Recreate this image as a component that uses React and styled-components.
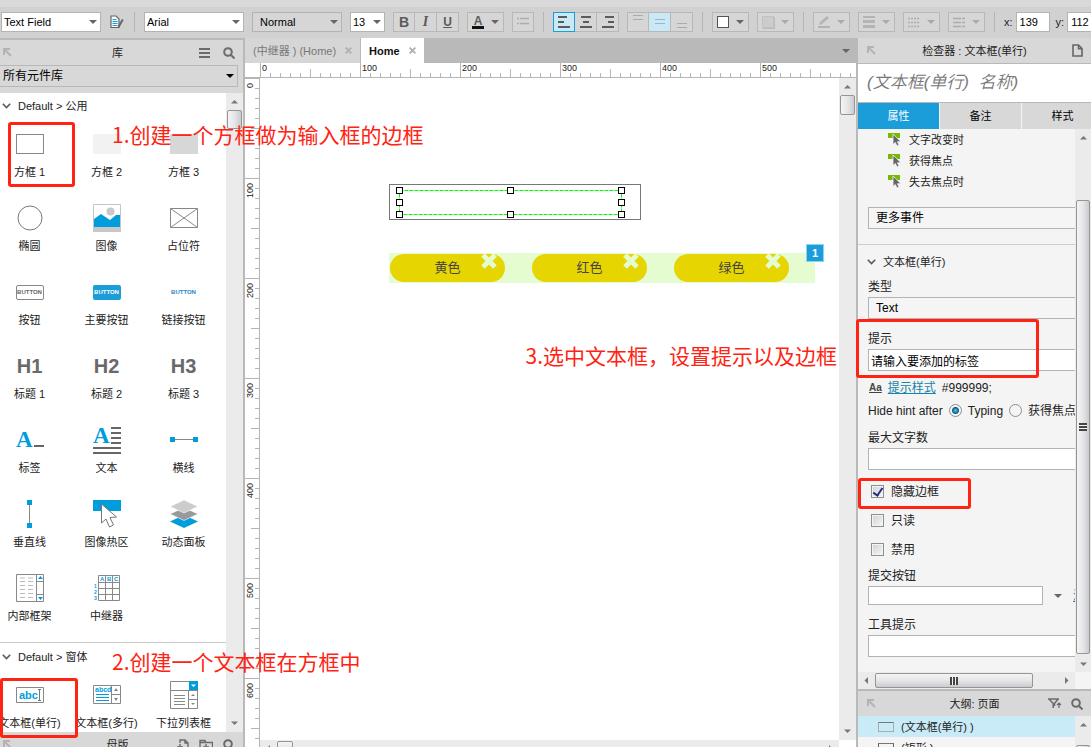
import styled, { createGlobalStyle, css } from "styled-components";

const RED = "#ff2313";
const BLUE = "#1b9dd9";
const ICON_BLUE = "#009ddc";

const Caret = ({ color = "#666" }) => (
  <svg width="8" height="4" viewBox="0 0 8 4">
    <path d="M0 0h8L4 4z" fill={color} />
  </svg>
);
const PinIcon = () => (
  <svg width="9" height="9" viewBox="0 0 9 9" fill="none" stroke="#b4b4b4" strokeWidth="2">
    <path d="M1 7V1h6M1 1l7 7" />
  </svg>
);
const SearchIcon = () => (
  <svg width="12" height="12" viewBox="0 0 12 12" fill="none" stroke="#6b6b6b" strokeWidth="2">
    <circle cx="5" cy="5" r="3.800" />
    <path d="M7.700 7.700l3.800 3.800" />
  </svg>
);
const MenuIcon = () => (
  <svg width="11" height="10" viewBox="0 0 11 10" fill="#6b6b6b">
    <path d="M0 0h11v2H0zM0 4h11v2H0zM0 8h11v2H0z" />
  </svg>
);
const ChevronIcon = () => (
  <svg width="9" height="6" viewBox="0 0 9 6" fill="none" stroke="#555a60" strokeWidth="1.600">
    <path d="M.8.8l3.700 3.700L8.200.8" />
  </svg>
);
const CloseIcon = () => (
  <svg width="7" height="7" viewBox="0 0 7 7" fill="none" stroke="#b0b0b0" strokeWidth="1.800">
    <path d="M.6.6l5.800 5.800M6.400.6L.6 6.400" />
  </svg>
);
const PageIcon = () => (
  <svg width="11" height="13" viewBox="0 0 11 13" fill="none" stroke="#666" strokeWidth="1.600">
    <path d="M1 1h5.500L10 4.500V12H1zM6.500 1v3.700H10" />
  </svg>
);
const EventIcon = () => (
  <svg width="13" height="13" viewBox="0 0 13 13">
    <path d="M0 0h12v5H0z" fill="#76b900" />
    <path d="M5 1v10.500l2.300-2L9 13l2-.9-1.500-3.400H13z" fill="#666" stroke="#f4f4f4" strokeWidth=".8" />
  </svg>
);
const EditStyleIcon = () => (
  <svg width="14" height="14" viewBox="0 0 14 14" fill="none">
    <path d="M1 1h5l3 3v8.500H1z" fill="#fff" stroke="#666" strokeWidth="1.200" />
    <path d="M2.500 4.500h4M2.500 6.500h5M2.500 8.500h5M2.500 10.500h5" stroke={BLUE} />
    <path d="M12.800 4.500L8.500 12" stroke="#666" strokeWidth="2" />
  </svg>
);
const FilterIcon = () => (
  <svg width="14" height="11" viewBox="0 0 14 11" fill="none" stroke="#6b6b6b" strokeWidth="1.500">
    <path d="M0 1h11M1 1l4.200 4.500V10M10 1L6.500 5.500V8" />
    <path d="M11 10V5M9 7l2-2 2 2" strokeWidth="1.200" />
  </svg>
);
const AddPageIcon = () => (
  <svg width="12" height="12" viewBox="0 0 12 12" fill="none" stroke="#6b6b6b" strokeWidth="1.400">
    <path d="M3 4V1h5l3 3v7H7M8 1v3h3M0 8h6M3 5v6" />
  </svg>
);
const AddFolderIcon = () => (
  <svg width="14" height="12" viewBox="0 0 14 12" fill="none" stroke="#6b6b6b" strokeWidth="1.400">
    <path d="M1 11V1.500h5l1 2h6.500V11M4 8h6M7 5v6M1 3.500h8" />
  </svg>
);

// bars: [x, width] for each line of a paragraph icon
const Bars = ({ bars, color = "#5b5b5b", step = 4, thick = 2 }) => (
  <svg width="12" height={bars.length * step} viewBox={`0 0 12 ${bars.length * step}`}>
    {bars.map(([x, w], i) => (
      <rect key={i} x={x} y={i * step + 1} width={w} height={thick} fill={color} />
    ))}
  </svg>
);
const FaintRows = ({ rows = 2, dash }) => (
  <svg width="12" height="12" viewBox="0 0 12 12" stroke="#adadad" fill="none">
    {Array.from({ length: rows }, (_, i) => (
      <path key={i} d={`M0 ${2.5 + i * (rows > 2 ? 4 : 5)}h12`} strokeDasharray={dash} strokeWidth="1.500" />
    ))}
  </svg>
);

const shapes = {
  box1: <rect x=".5" y="4.500" width="27" height="19" fill="#fff" stroke="#888" />,
  box2: <rect y="4" width="28" height="20" fill="#f2f2f2" />,
  box3: <rect y="4" width="28" height="20" fill="#d7d7d7" />,
  ellipse: <circle cx="14" cy="14" r="12" fill="#fff" stroke="#777" />,
  image: (
    <>
      <path d="M.5.5h27v27H.5z" fill="#fff" stroke="#c4c4c4" />
      <circle cx="17.500" cy="7.500" r="4" fill="#c8c8c8" />
      <path d="M1 15l7-5 9 6 6-5h4v12H1z" fill={ICON_BLUE} />
      <path d="M0 23h28v5H0z" fill="#c8c8c8" />
    </>
  ),
  placeholder: (
    <g stroke="#888" fill="#fff">
      <path d="M.5 4.500h27v19H.5z" />
      <path d="M.5 4.500l27 19M27.500 4.500l-27 19" />
    </g>
  ),
  label: <path d="M18 19h10v2H18z" fill="#666" />,
  text: <path d="M18 1h10v2H18zM18 6h10v2H18zM18 11h10v2H18zM18 16h10v2H18zM0 21h28v2H0zM0 26h28v2H0z" fill="#666" />,
  hline: (
    <>
      <path d="M2 13.500h24" stroke="#888" />
      <path d="M0 11h5v5H0zM23 11h5v5h-5z" fill={ICON_BLUE} />
    </>
  ),
  vline: (
    <>
      <path d="M13.500 2v24" stroke="#888" />
      <path d="M11 0h5v5h-5zM11 23h5v5h-5z" fill={ICON_BLUE} />
    </>
  ),
  hotspot: (
    <>
      <path d="M0 0h28v11H0z" fill={ICON_BLUE} />
      <path d="M8.500 4v19l4.500-4 3.500 8 4-2-3.500-7.500 6.500-.5z" fill="#fff" stroke="#777" />
    </>
  ),
  dynamic: (
    <>
      <path d="M14 15l14 6.500L14 28 0 21.500z" fill={ICON_BLUE} />
      <path d="M14 7.500L28 14l-14 6.500L0 14z" fill="#999" stroke="#fff" strokeWidth=".6" />
      <path d="M14 0l14 6.500L14 13 0 6.500z" fill="#ccc" stroke="#fff" strokeWidth=".6" />
    </>
  ),
  iframe: (
    <>
      <path d="M.5.5h27v27H.5zM20.500.5v27M20.500 7.500h7M20.500 20.500h7" fill="none" stroke="#888" />
      <path d="M4 4h5m3 0h5M4 7.500h5m3 0h5M4 11.500h5m3 0h5M4 15.500h5m3 0h5M4 19.500h5m3 0h5M4 23.500h5m3 0h5" stroke="#bbb" />
      <path d="M22 5h5l-2.500-3zM22 23h5l-2.500 3z" fill={ICON_BLUE} />
    </>
  ),
  repeater: (
    <>
      <path d="M5.500 1.500h21v25h-21zM12.500 1.500v25M19.500 1.500v25M5.500 8.500h21M5.500 14.500h21M5.500 20.500h21" fill="none" stroke="#888" />
      <SvgText x="7" y="7" fontSize="6">A</SvgText>
      <SvgText x="14" y="7" fontSize="6">B</SvgText>
      <SvgText x="21" y="7" fontSize="6">C</SvgText>
      <SvgText x="1" y="14" fontSize="5">1</SvgText>
      <SvgText x="1" y="20" fontSize="5">2</SvgText>
      <SvgText x="1" y="26" fontSize="5">3</SvgText>
    </>
  ),
  field: (
    <>
      <path d="M.5 6.500h27v15H.5z" fill="#fff" stroke="#888" />
      <SvgText x="3" y="18" fontSize="11">abc</SvgText>
      <path d="M22 8.500h3M22 19.500h3M23.500 8.500v11" stroke="#777" />
    </>
  ),
  area: (
    <>
      <path d="M.5 4.500h27v18H.5zM18.500 4.500v18M18.500 13.500h9" fill="#fff" stroke="#888" />
      <SvgText x="2" y="11" fontSize="7">abcd</SvgText>
      <path d="M3 13.500h13M3 16.500h13M3 19.500h13" stroke={ICON_BLUE} />
      <path d="M21 10h4l-2-3zM21 17h4l-2 3z" fill="#888" />
    </>
  ),
  droplist: (
    <>
      <path d="M.5.5h27v27H.5zM.5 9.500h27M18.500 9.500v18M18.500 18.500h9" fill="#fff" stroke="#888" />
      <path d="M19 0h9v9h-9z" fill={ICON_BLUE} />
      <path d="M21 3.500h5L23.500 6z" fill="#fff" />
      <path d="M4 14.500h11M4 17.500h11M4 20.500h11M4 23.500h11" stroke="#888" />
      <path d="M21 15h4l-2-2zM21 22h4l-2 2z" fill="#888" />
    </>
  ),
};

function SvgText({ children, ...rest }) {
  return (
    <text fill={ICON_BLUE} fontFamily="Liberation Sans" fontWeight="bold" {...rest}>
      {children}
    </text>
  );
}

const SvgShape = ({ name }) => (
  <svg width="28" height="28" viewBox="0 0 28 28" overflow="visible">
    {(name === "label" || name === "text") && (
      <text
        x="0"
        y={name === "label" ? 21 : 17}
        fontSize="23"
        fontWeight="bold"
        fontFamily="Liberation Serif"
        fill={ICON_BLUE}
      >
        A
      </text>
    )}
    {shapes[name]}
  </svg>
);

const commonWidgets = [
  { name: "方框 1", icon: "box1" },
  { name: "方框 2", icon: "box2" },
  { name: "方框 3", icon: "box3" },
  { name: "椭圆", icon: "ellipse" },
  { name: "图像", icon: "image" },
  { name: "占位符", icon: "placeholder" },
  { name: "按钮", button: "outline" },
  { name: "主要按钮", button: "primary" },
  { name: "链接按钮", button: "link" },
  { name: "标题 1", heading: "H1" },
  { name: "标题 2", heading: "H2" },
  { name: "标题 3", heading: "H3" },
  { name: "标签", icon: "label" },
  { name: "文本", icon: "text" },
  { name: "横线", icon: "hline" },
  { name: "垂直线", icon: "vline" },
  { name: "图像热区", icon: "hotspot" },
  { name: "动态面板", icon: "dynamic" },
  { name: "内部框架", icon: "iframe" },
  { name: "中继器", icon: "repeater" },
];
const formWidgets = [
  { name: "文本框(单行)", icon: "field" },
  { name: "文本框(多行)", icon: "area" },
  { name: "下拉列表框", icon: "droplist" },
];

const Widgets = ({ items }) => (
  <WidgetGrid>
    {items.map((el) => (
      <Widget key={el.name}>
        <WidgetIcon>
          {el.icon && <SvgShape name={el.icon} />}
          {el.button && <MiniButton $kind={el.button}>BUTTON</MiniButton>}
          {el.heading && <MiniHeading>{el.heading}</MiniHeading>}
        </WidgetIcon>
        <WidgetName>{el.name}</WidgetName>
      </Widget>
    ))}
  </WidgetGrid>
);

const Dropdown = ({ value, width, muted, label, caret, inset }) => (
  <SelectBox $width={width} $muted={muted}>
    <Select aria-label={label} defaultValue={value} $inset={inset}>
      <option>{value}</option>
    </Select>
    <CaretSlot>
      <Caret color={caret} />
    </CaretSlot>
  </SelectBox>
);

const ScrollBar = ({ horizontal, size, before = 0, thumb, grip }) => (
  <Track $horizontal={horizontal} $size={size}>
    <TrackEnd $size={size}>
      <svg width="7" height="7" viewBox="0 0 7 7">
        <path d={horizontal ? "M5 0v7L1.500 3.500z" : "M0 5.500h7L3.500 2z"} fill="#777" />
      </svg>
    </TrackEnd>
    <TrackBody $horizontal={horizontal} $before={before}>
      <Thumb $horizontal={horizontal} $length={thumb}>
        {grip && <Grip $horizontal={horizontal} />}
      </Thumb>
    </TrackBody>
    <TrackEnd $size={size}>
      <svg width="7" height="7" viewBox="0 0 7 7">
        <path d={horizontal ? "M2 0v7l3.500-3.500z" : "M0 1.500h7L3.500 5z"} fill="#777" />
      </svg>
    </TrackEnd>
  </Track>
);

const Toolbar = () => (
  <ToolbarRow>
    <Dropdown label="样式" value="Text Field" width={100} />
    <PlainIcon aria-label="编辑样式">
      <EditStyleIcon />
    </PlainIcon>
    <Divider />
    <Dropdown label="字体" value="Arial" width={100} />
    <Dropdown label="字重" value="Normal" width={90} muted inset={7} />
    <Dropdown label="字号" value="13" width={35} />
    <ButtonGroup>
      <ToolButton $weight="bold">B</ToolButton>
      <ToolButton $italic>I</ToolButton>
      <ToolButton $underline>U</ToolButton>
    </ButtonGroup>
    <ButtonGroup>
      <ToolButton $wide aria-label="文字颜色">
        <ColorLetter>A</ColorLetter>
        <Caret />
      </ToolButton>
    </ButtonGroup>
    <ButtonGroup>
      <ToolButton aria-label="项目符号">
        <FaintRows dash="2 1 9" />
      </ToolButton>
    </ButtonGroup>
    <Divider />
    <ButtonGroup>
      <ToolButton $active aria-label="左对齐">
        <Bars bars={[[0, 9], [0, 6], [0, 12]]} step={5} />
      </ToolButton>
      <ToolButton aria-label="居中">
        <Bars bars={[[1, 10], [3, 6], [0, 12]]} step={5} />
      </ToolButton>
      <ToolButton aria-label="右对齐">
        <Bars bars={[[3, 9], [6, 6], [0, 12]]} step={5} />
      </ToolButton>
    </ButtonGroup>
    <ButtonGroup>
      <ToolButton $valign="flex-start" aria-label="顶部对齐">
        <Bars bars={[[1, 10], [1, 10]]} step={4} thick={1} color="#aaa" />
      </ToolButton>
      <ToolButton $pale aria-label="垂直居中">
        <Bars bars={[[1, 10], [1, 10]]} step={4} thick={1} color="#9ab6c2" />
      </ToolButton>
      <ToolButton $valign="flex-end" aria-label="底部对齐">
        <Bars bars={[[1, 10], [1, 10]]} step={4} thick={1} color="#aaa" />
      </ToolButton>
    </ButtonGroup>
    <Divider />
    <ButtonGroup>
      <ToolButton $wide aria-label="填充">
        <FillSwatch />
        <Caret />
      </ToolButton>
    </ButtonGroup>
    <ButtonGroup>
      <ToolButton $wide aria-label="阴影">
        <FillSwatch $shadow />
        <Caret color="#aaa" />
      </ToolButton>
    </ButtonGroup>
    <Divider />
    <ButtonGroup>
      <ToolButton $wide aria-label="线条颜色">
        <svg width="12" height="12" viewBox="0 0 12 12" fill="#b4b4b4">
          <path d="M0 10h12v2H0zM1 9l1-3 7-6 2 2-7 6z" />
        </svg>
        <Caret color="#aaa" />
      </ToolButton>
    </ButtonGroup>
    <ButtonGroup>
      <ToolButton $wide aria-label="线宽">
        <svg width="12" height="12" viewBox="0 0 12 12" fill="#b4b4b4">
          <path d="M0 0h12v2H0zM0 4h12v3H0zM0 9h12v3H0z" />
        </svg>
        <Caret color="#aaa" />
      </ToolButton>
    </ButtonGroup>
    <ButtonGroup>
      <ToolButton $wide aria-label="线型">
        <FaintRows rows={3} dash="2 1" />
        <Caret color="#aaa" />
      </ToolButton>
    </ButtonGroup>
    <ButtonGroup>
      <ToolButton $wide aria-label="箭头">
        <FaintRows rows={3} dash="8 1" />
        <Caret color="#aaa" />
      </ToolButton>
    </ButtonGroup>
    <Divider />
    <Coord>
      x:
      <CoordInput defaultValue="139" />
    </Coord>
    <Coord>
      y:
      <CoordInput defaultValue="112" />
    </Coord>
  </ToolbarRow>
);

const Library = () => (
  <LibraryPanel>
    <PanelHeader $line>
      <PinIcon />
      <PanelTitle>库</PanelTitle>
      <HeaderTools $gap={13}>
        <MenuIcon />
        <SearchIcon />
      </HeaderTools>
    </PanelHeader>
    <LibraryPicker>
      <Select aria-label="元件库" defaultValue="所有元件库" $inset={3} $large>
        <option>所有元件库</option>
      </Select>
      <CaretSlot>
        <Caret color="#000" />
      </CaretSlot>
    </LibraryPicker>
    <ScrollRow>
      <LibraryList>
        <GroupTitle>
          <ChevronIcon />
          Default &gt; 公用
        </GroupTitle>
        <Widgets items={commonWidgets} />
        <GroupTitle $next>
          <ChevronIcon />
          Default &gt; 窗体
        </GroupTitle>
        <Widgets items={formWidgets} />
      </LibraryList>
      <ScrollBar size={17} thumb={19} />
    </ScrollRow>
    <MasterBar>
      <PanelHeader>
        <PinIcon />
        <PanelTitle>母版</PanelTitle>
        <HeaderTools $gap={10}>
          <AddPageIcon />
          <AddFolderIcon />
          <SearchIcon />
        </HeaderTools>
      </PanelHeader>
    </MasterBar>
    <RedFrame $x={8} $y={84} $w={67} $h={65} />
    <RedFrame $x={0} $y={640} $w={78} $h={60} />
    <RedNote $x={112} $y={82}>1.创建一个方框做为输入框的边框</RedNote>
    <RedNote $x={112} $y={609}>2.创建一个文本框在方框中</RedNote>
  </LibraryPanel>
);

const handles = [0, 111, 222].flatMap((x) => [0, 12, 24].map((y) => [x, y])).filter(([x, y]) => !(x === 111 && y === 12));

const Workspace = () => (
  <WorkspacePanel>
    <TabBar>
      <PageTab>
        (中继器 ) (Home)
        <CloseIcon />
      </PageTab>
      <PageTab $active>
        Home
        <CloseIcon />
      </PageTab>
      <TabMenu>
        <Caret />
      </TabMenu>
    </TabBar>
    <RulerRow>
      <RulerCorner />
      <TopRuler>
        {[0, 100, 200, 300, 400, 500].map((n) => (
          <TopMark key={n}>{n}</TopMark>
        ))}
      </TopRuler>
    </RulerRow>
    <CanvasRow>
      <SideRuler>
        {[0, 100, 200, 300, 400, 500, 600].map((n) => (
          <SideMark key={n}>
            <span>{n}</span>
          </SideMark>
        ))}
      </SideRuler>
      <CanvasColumn>
        <ScrollRow>
          <Canvas>
            <OuterRect />
            <Selection width="230" height="32" viewBox="0 0 230 32">
              <rect x="4.500" y="4.500" width="222" height="24" fill="none" stroke="#0f0" strokeDasharray="4 1" />
              {handles.map(([x, y]) => (
                <rect key={`${x}-${y}`} x={x + 1.5} y={y + 1.5} width="6" height="6" fill="#fff" stroke="#000" />
              ))}
            </Selection>
            <Repeater>
              {["黄色", "红色", "绿色"].map((el) => (
                <Tag key={el}>
                  {el}
                  <TagClose viewBox="0 0 16 16">
                    <path d="M2 2l12 12M14 2L2 14" stroke="#e4fccf" strokeWidth="5" />
                  </TagClose>
                </Tag>
              ))}
            </Repeater>
            <Badge>1</Badge>
          </Canvas>
          <ScrollBar size={17} thumb={20} />
        </ScrollRow>
        <BottomScroll>
          <ScrollBar horizontal size={17} thumb={16} />
        </BottomScroll>
      </CanvasColumn>
    </CanvasRow>
    <RedNote $right={19} $y={303}>3.选中文本框，设置提示以及边框</RedNote>
  </WorkspacePanel>
);

const Inspector = () => (
  <InspectorPanel>
    <PanelHeader>
      <PinSlot>
        <PinIcon />
      </PinSlot>
      <PanelTitle>检查器 : 文本框(单行)</PanelTitle>
      <HeaderTools>
        <PageIcon />
      </HeaderTools>
    </PanelHeader>
    <NameInput aria-label="名称" placeholder="(文本框(单行)  名称)" />
    <InspectorTabs>
      <InspectorTab $active>属性</InspectorTab>
      <InspectorTab>备注</InspectorTab>
      <InspectorTab>样式</InspectorTab>
    </InspectorTabs>
    <ScrollRow>
      <FormColumn>
        <FormScroll>
          <Form>
            <EventList>
              {["文字改变时", "获得焦点", "失去焦点时"].map((el) => (
                <EventItem key={el}>
                  <EventIcon />
                  {el}
                </EventItem>
              ))}
            </EventList>
            <FormSelect aria-label="更多事件" defaultValue="更多事件">
              <option>更多事件</option>
            </FormSelect>
            <SectionTitle>
              <ChevronIcon />
              文本框(单行)
            </SectionTitle>
            <FieldLabel htmlFor="type">类型</FieldLabel>
            <FormSelect id="type" defaultValue="Text">
              <option>Text</option>
            </FormSelect>
            <FieldLabel htmlFor="hint" $gap={12}>提示</FieldLabel>
            <FormInput id="hint" defaultValue="请输入要添加的标签" />
            <InlineRow $gap={5}>
              <AaMark>Aa</AaMark>
              <StyleLink href="#hint">提示样式</StyleLink>
              <span>#999999;</span>
            </InlineRow>
            <InlineRow>
              <span>Hide hint after</span>
              <Option>
                <Radio type="radio" name="hide" defaultChecked />
                Typing
              </Option>
              <Option>
                <Radio type="radio" name="hide" />
                获得焦点
              </Option>
            </InlineRow>
            <FieldLabel htmlFor="max" $gap={8}>最大文字数</FieldLabel>
            <FormInput id="max" />
            <Checks>
              <CheckRow>
                <Check type="checkbox" defaultChecked />
                隐藏边框
              </CheckRow>
              <CheckRow>
                <Check type="checkbox" />
                只读
              </CheckRow>
              <CheckRow>
                <Check type="checkbox" />
                禁用
              </CheckRow>
            </Checks>
            <FieldLabel htmlFor="submit" $gap={4}>提交按钮</FieldLabel>
            <SubmitRow>
              <FormInput id="submit" $short />
              <Caret />
              <StyleLink href="#submit">清除</StyleLink>
            </SubmitRow>
            <FieldLabel htmlFor="tip" $gap={12}>工具提示</FieldLabel>
            <FormInput id="tip" />
          </Form>
        </FormScroll>
        <ScrollBar horizontal size={17} thumb={158} grip />
      </FormColumn>
      <SideScroll>
        <ScrollBar size={16} before={55} thumb={454} grip />
      </SideScroll>
    </ScrollRow>
    <Outline>
      <PanelHeader>
        <PinSlot>
          <PinIcon />
        </PinSlot>
        <PanelTitle>大纲: 页面</PanelTitle>
        <HeaderTools $gap={9}>
          <FilterIcon />
          <SearchIcon />
        </HeaderTools>
      </PanelHeader>
      <OutlineBody>
        <OutlineList>
          <OutlineItem $selected>
            <OutlineShape />
            (文本框(单行) )
          </OutlineItem>
          <OutlineItem>
            <OutlineShape $dark />
            (矩形 )
          </OutlineItem>
        </OutlineList>
        <ScrollBar size={16} before={13} thumb={30} />
      </OutlineBody>
    </Outline>
    <RedFrame $x={-2} $y={281} $w={183} $h={59} />
    <RedFrame $x={0} $y={440} $w={113} $h={31} />
  </InspectorPanel>
);

export default function App() {
  return (
    <>
      <GlobalStyle />
      <Page>
        <Toolbar />
        <Main>
          <Library />
          <Workspace />
          <Inspector />
        </Main>
      </Page>
    </>
  );
}

const GlobalStyle = createGlobalStyle`
  * {
    box-sizing: border-box;
  }
  body {
    margin: 0;
    font-family: "Liberation Sans", "Noto Sans CJK SC", sans-serif;
    font-size: 11px;
    line-height: 16px;
    color: #222;
  }
  button, input, select {
    font: inherit;
    color: inherit;
    margin: 0;
    padding: 0;
  }
  svg {
    display: block;
    flex: none;
  }
`;

const Page = styled.div`
  height: 100vh;
  display: flex;
  flex-direction: column;
  overflow: hidden;
  background: #d8d8d8;
`;

const Main = styled.main`
  flex: 1;
  min-height: 0;
  display: flex;
`;

/* toolbar */
const ToolbarRow = styled.header`
  flex: none;
  display: flex;
  gap: 8px;
  padding: 5px 0 6px 1px;
  border-top: 7px solid #d9d9d9;
  background: #d1d1d1;
`;

const Divider = styled.div`
  flex: none;
  width: 3px;
  background: linear-gradient(#b5b5b5, #b5b5b5) center / 1px 100% no-repeat;
`;

const SelectBox = styled.div`
  flex: none;
  position: relative;
  width: ${(props) => props.$width}px;
  height: 20px;
  border: 1px solid #b3b3b3;
  background: ${(props) => (props.$muted ? "#d6d6d6" : "#fff")};
`;

const Select = styled.select`
  appearance: none;
  display: block;
  width: 100%;
  height: 100%;
  padding-left: ${(props) => props.$inset ?? 2}px;
  border: none;
  background: transparent;
  font-size: ${(props) => (props.$large ? 12 : 11)}px;
  color: #000;
`;

const CaretSlot = styled.span`
  position: absolute;
  right: 3px;
  top: 0;
  bottom: 0;
  display: flex;
  align-items: center;
  pointer-events: none;
`;

const PlainIcon = styled.button`
  flex: none;
  width: 16px;
  display: flex;
  align-items: center;
  justify-content: center;
  border: none;
  background: none;
`;

const ButtonGroup = styled.div`
  flex: none;
  display: flex;
  height: 20px;
`;

const ToolButton = styled.button`
  width: ${(props) => (props.$wide ? 37 : 22)}px;
  height: 20px;
  display: flex;
  align-items: ${(props) => props.$valign || "center"};
  justify-content: center;
  gap: 7px;
  padding: 1px 0;
  border: 1px solid #b8b8b8;
  background: ${(props) => (props.$active || props.$pale ? "#c9e9f7" : "#d6d6d6")};
  color: #5b5b5b;
  font-size: 14px;
  font-weight: bold;
  line-height: 16px;
  ${(props) =>
    props.$active &&
    css`
      border-color: ${BLUE};
    `}
  ${(props) =>
    props.$italic &&
    css`
      font-family: "Liberation Serif", serif;
      font-style: italic;
    `}
  ${(props) =>
    props.$underline &&
    css`
      font-size: 12px;
      text-decoration: underline;
    `}
  & + & {
    border-left-width: 0;
  }
`;

const ColorLetter = styled.span`
  width: 12px;
  height: 13px;
  border-bottom: 3px solid #111;
  font-size: 12px;
  line-height: 10px;
`;

const FillSwatch = styled.span`
  width: 12px;
  height: 12px;
  border: 1px solid ${(props) => (props.$shadow ? "#c2c2c2" : "#555")};
  background: ${(props) => (props.$shadow ? "#ccc" : "#fff")};
  box-shadow: ${(props) => (props.$shadow ? "1px 1px 0 #bbb" : "none")};
`;

const Coord = styled.label`
  flex: none;
  display: flex;
  align-items: center;
  gap: 3px;
  & + & {
    margin-left: -2px;
  }
`;

const CoordInput = styled.input`
  width: 34px;
  height: 20px;
  padding-left: 3px;
  border: 1px solid #b3b3b3;
  background: #fff;
  color: #000;
`;

/* panels */
const PanelHeader = styled.div`
  flex: none;
  position: relative;
  height: 25px;
  display: flex;
  align-items: center;
  justify-content: space-between;
  padding: 0 8px 0 3px;
  background: #d8d8d8;
  ${(props) =>
    props.$line &&
    css`
      height: 27px;
      border-top: 2px solid #b9b9b9;
    `}
`;

const PanelTitle = styled.h2`
  position: absolute;
  left: 0;
  right: 8px;
  margin: 0;
  text-align: center;
  font-size: 11px;
  font-weight: normal;
  aside & {
    right: 0;
  }
`;

const HeaderTools = styled.div`
  display: flex;
  align-items: center;
  gap: ${(props) => props.$gap || 0}px;
`;

const PinSlot = styled.div`
  padding-left: 6px;
`;

const ScrollRow = styled.div`
  flex: 1;
  min-height: 0;
  display: flex;
`;

const LibraryPanel = styled.section`
  position: relative;
  z-index: 1;
  flex: none;
  width: 243px;
  display: flex;
  flex-direction: column;
`;

const LibraryPicker = styled.div`
  flex: none;
  position: relative;
  height: 22px;
  margin: 0 5px 6px 0;
  border: 1px solid #b8b8b8;
  border-left: none;
`;

const LibraryList = styled.div`
  flex: 1;
  min-width: 0;
  overflow: hidden;
  background: #fff;
`;

const GroupTitle = styled.h3`
  height: 26px;
  display: flex;
  align-items: center;
  gap: 7px;
  margin: 0;
  padding-left: 2px;
  font-size: 11px;
  font-weight: normal;
  ${(props) =>
    props.$next &&
    css`
      height: 28px;
      margin-top: 5px;
      border-top: 1px solid #ccc;
    `}
`;

const WidgetGrid = styled.div`
  display: grid;
  grid-template-columns: repeat(3, 77px);
  margin-left: -9px;
`;

const Widget = styled.div`
  height: 74px;
  display: flex;
  flex-direction: column;
  align-items: center;
  gap: 6px;
  padding-top: 11px;
`;

const WidgetIcon = styled.div`
  height: 28px;
  display: flex;
  align-items: center;
  justify-content: center;
`;

const WidgetName = styled.span`
  white-space: nowrap;
`;

const MiniHeading = styled.span`
  font-size: 20px;
  font-weight: bold;
  color: #696969;
`;

const MiniButton = styled.span`
  width: 28px;
  border: 1px solid transparent;
  border-radius: 2px;
  font-size: 6px;
  font-weight: bold;
  line-height: 13px;
  text-align: center;
  color: #666;
  ${(props) =>
    props.$kind === "outline" &&
    css`
      border-color: #888;
    `}
  ${(props) =>
    props.$kind === "primary" &&
    css`
      background: ${BLUE};
      color: #fff;
    `}
  ${(props) =>
    props.$kind === "link" &&
    css`
      color: #2a83c4;
    `}
`;

const MasterBar = styled.div`
  flex: none;
  height: 15px;
  overflow: hidden;
`;

/* scrollbars */
const Track = styled.div`
  flex: none;
  display: flex;
  flex-direction: ${(props) => (props.$horizontal ? "row" : "column")};
  ${(props) => (props.$horizontal ? "height" : "width")}: ${(props) => props.$size}px;
  background: #ebebeb;
  overflow: hidden;
`;

const TrackEnd = styled.div`
  flex: none;
  width: ${(props) => props.$size}px;
  height: ${(props) => props.$size}px;
  display: flex;
  align-items: center;
  justify-content: center;
`;

const TrackBody = styled.div`
  flex: 1;
  min-height: 0;
  padding: ${(props) => (props.$horizontal ? "1px 0" : `${props.$before}px 1px 0`)};
`;

const Thumb = styled.div`
  display: flex;
  align-items: center;
  justify-content: center;
  width: ${(props) => (props.$horizontal ? `${props.$length}px` : "100%")};
  height: ${(props) => (props.$horizontal ? "100%" : `${props.$length}px`)};
  border: 1px solid #959595;
  border-radius: 2px;
  background: linear-gradient(${(props) => (props.$horizontal ? "to bottom" : "to right")}, #f4f4f4, #e6e6e8 50%, #c9cbd0);
`;

const Grip = styled.div`
  width: 8px;
  height: 8px;
  background: repeating-linear-gradient(
    ${(props) => (props.$horizontal ? "to right" : "to bottom")},
    #444 0 2px,
    #f4f4f4 2px 3px
  );
`;

/* workspace */
const WorkspacePanel = styled.section`
  position: relative;
  flex: 1;
  min-width: 0;
  display: flex;
  flex-direction: column;
  border-left: 2px solid #b9b9b9;
  background: #fff;
`;

const TabBar = styled.div`
  flex: none;
  height: 25px;
  display: flex;
  background: #b9b9b9;
`;

const PageTab = styled.button`
  display: flex;
  align-items: center;
  gap: 9px;
  margin-right: 1px;
  padding: 0 8px;
  border: none;
  background: ${(props) => (props.$active ? "#fff" : "#d6d6d6")};
  color: ${(props) => (props.$active ? "#111" : "#777")};
  font-weight: ${(props) => (props.$active ? "bold" : "normal")};
`;

const TabMenu = styled.div`
  flex: 1;
  display: flex;
  align-items: center;
  justify-content: flex-end;
  padding-right: 6px;
`;

const RulerRow = styled.div`
  flex: none;
  display: flex;
`;

const RulerCorner = styled.div`
  flex: none;
  width: 15px;
  height: 15px;
  border-bottom: 1px solid #b5b5b5;
`;

const tick = "#b5b5b5 1px, transparent 1px";

const TopRuler = styled.div`
  flex: 1;
  min-width: 0;
  display: flex;
  height: 15px;
  overflow: hidden;
  border-bottom: 1px solid #b5b5b5;
  background:
    linear-gradient(to right, ${tick}) left bottom / 10px 4px repeat-x,
    linear-gradient(to right, ${tick}) left bottom / 50px 8px repeat-x,
    linear-gradient(to right, ${tick}) left bottom / 100px 100% repeat-x;
`;

const TopMark = styled.span`
  flex: none;
  width: 100px;
  padding-left: 2px;
  font-size: 9px;
  line-height: 11px;
`;

const CanvasRow = styled.div`
  flex: 1;
  min-height: 0;
  display: flex;
`;

const SideRuler = styled.div`
  flex: none;
  width: 15px;
  overflow: hidden;
  border-right: 1px solid #b5b5b5;
  background:
    linear-gradient(to bottom, ${tick}) right top / 4px 10px repeat-y,
    linear-gradient(to bottom, ${tick}) right top / 8px 50px repeat-y,
    linear-gradient(to bottom, ${tick}) right top / 100% 100px repeat-y;
`;

const SideMark = styled.div`
  height: 100px;
  padding-top: 5px;
  font-size: 9px;
  line-height: 11px;
  span {
    display: block;
    width: 11px;
    writing-mode: vertical-rl;
    transform: rotate(180deg);
  }
`;

const CanvasColumn = styled.div`
  flex: 1;
  min-width: 0;
  display: flex;
  flex-direction: column;
`;

const Canvas = styled.div`
  position: relative;
  flex: 1;
  min-width: 0;
`;

const OuterRect = styled.div`
  position: absolute;
  left: 129px;
  top: 106px;
  width: 252px;
  height: 36px;
  border: 1px solid #777;
`;

const Selection = styled.svg`
  position: absolute;
  left: 135px;
  top: 108px;
`;

const Repeater = styled.div`
  position: absolute;
  left: 129px;
  top: 175px;
  width: 426px;
  display: flex;
  gap: 27px;
  padding: 1px;
  background: #e4fccf;
`;

const Tag = styled.div`
  position: relative;
  width: 115px;
  height: 28px;
  border-radius: 14px;
  background: #e6d500;
  color: #444;
  font-size: 13px;
  line-height: 28px;
  text-align: center;
`;

const TagClose = styled.svg`
  position: absolute;
  right: 8px;
  top: -1px;
  width: 16px;
  height: 16px;
`;

const Badge = styled.div`
  position: absolute;
  left: 546px;
  top: 166px;
  width: 18px;
  height: 18px;
  border: 1px solid #8fd2f0;
  background: ${BLUE};
  color: #fff;
  font-weight: bold;
  text-align: center;
`;

const BottomScroll = styled.div`
  flex: none;
  height: 7px;
  margin-right: 17px;
  overflow: hidden;
`;

/* inspector */
const InspectorPanel = styled.aside`
  position: relative;
  flex: none;
  width: 235px;
  display: flex;
  flex-direction: column;
  border-left: 2px solid #b9b9b9;
  background: #f4f4f4;
`;

const NameInput = styled.input`
  flex: none;
  height: 40px;
  padding-left: 9px;
  border: solid #b9b9b9;
  border-width: 1px 0;
  background: #fff;
  font-size: 17px;
  font-style: italic;
  &::placeholder {
    color: #777;
    font-weight: 350;
    opacity: 1;
  }
`;

const InspectorTabs = styled.div`
  flex: none;
  display: flex;
  gap: 1px;
  overflow: hidden;
  background: #f4f4f4;
`;

const InspectorTab = styled.button`
  flex: none;
  width: 81px;
  height: 26px;
  border: none;
  background: ${(props) => (props.$active ? BLUE : "#d8d8d8")};
  color: ${(props) => (props.$active ? "#fff" : "#000")};
`;

const FormColumn = styled.div`
  flex: 1;
  min-width: 0;
  display: flex;
  flex-direction: column;
`;

const FormScroll = styled.div`
  flex: 1;
  min-height: 0;
  overflow: hidden;
`;

const Form = styled.form`
  width: 280px;
  padding-left: 10px;
  font-size: 12px;
`;

const EventList = styled.ul`
  margin: 0 0 15px;
  padding: 0 0 0 20px;
  list-style: none;
  font-size: 11px;
`;

const EventItem = styled.li`
  height: 21px;
  display: flex;
  align-items: center;
  gap: 8px;
`;

const FormSelect = styled.select`
  appearance: none;
  display: block;
  width: 100%;
  height: 22px;
  padding-left: 7px;
  border: 1px solid #b3b3b3;
  border-radius: 0;
  background: #f5f5f5;
  color: #000;
`;

const SectionTitle = styled.h3`
  height: 35px;
  display: flex;
  align-items: center;
  gap: 7px;
  margin: 15px 0 0 -10px;
  padding-left: 9px;
  border-top: 1px solid #ccc;
  font-size: 11px;
  font-weight: normal;
`;

const FieldLabel = styled.label`
  display: block;
  margin-top: ${(props) => props.$gap || 0}px;
  padding-bottom: 2px;
`;

const FormInput = styled.input`
  display: block;
  width: ${(props) => (props.$short ? "175px" : "100%")};
  height: ${(props) => (props.$short ? 19 : 22)}px;
  padding-left: 2px;
  border: 1px solid #b3b3b3;
  background: #fff;
  color: #000;
`;

const InlineRow = styled.div`
  height: 23px;
  display: flex;
  align-items: center;
  gap: 6px;
  margin-top: ${(props) => props.$gap || 0}px;
  white-space: nowrap;
`;

const AaMark = styled.span`
  padding-left: 1px;
  color: #444;
  font-size: 10px;
  font-weight: bold;
  text-decoration: underline;
`;

const StyleLink = styled.a`
  color: #1684ab;
`;

const Option = styled.label`
  display: flex;
  align-items: center;
  gap: 6px;
`;

const Radio = styled.input`
  appearance: none;
  width: 13px;
  height: 13px;
  border: 1px solid #8a8f94;
  border-radius: 50%;
  background: #f4f4f4;
  &:checked {
    background: radial-gradient(circle, #5cc4ee 0, #1a86bf 2px, #14567f 3px, #f4f4f4 4px);
  }
`;

const Checks = styled.div`
  padding: 7px 0 0 3px;
`;

const CheckRow = styled.label`
  height: 29px;
  display: flex;
  align-items: center;
  gap: 7px;
`;

const Check = styled.input`
  appearance: none;
  width: 13px;
  height: 13px;
  border: 1px solid #8e8f8f;
  background: linear-gradient(135deg, #cdd2d8, #f6f6f6);
  box-shadow: inset 0 0 0 1px #f4f4f4;
  &:checked::before {
    content: "";
    display: block;
    width: 4px;
    height: 8px;
    margin: 0 0 0 3px;
    border: solid #2b2b7a;
    border-width: 0 2px 2px 0;
    transform: rotate(35deg);
  }
`;

const SubmitRow = styled.div`
  display: flex;
  align-items: center;
  gap: 11px;
`;

const SideScroll = styled.div`
  flex: none;
  display: flex;
  width: 16px;
  margin-bottom: 17px;
`;

const Outline = styled.div`
  flex: none;
  height: 58px;
  display: flex;
  flex-direction: column;
  overflow: hidden;
  border-top: 2px solid #b9b9b9;
`;

const OutlineBody = styled.div`
  flex: none;
  display: flex;
  height: 96px;
`;

const OutlineList = styled.ul`
  flex: 1;
  margin: 0;
  padding: 0;
  list-style: none;
  background: #f4f4f4;
`;

const OutlineItem = styled.li`
  height: 21px;
  display: flex;
  align-items: center;
  gap: 7px;
  padding-left: 20px;
  background: ${(props) => (props.$selected ? "#c9eaf7" : "#f4f4f4")};
`;

const OutlineShape = styled.span`
  width: 16px;
  height: 10px;
  border: 1px solid ${(props) => (props.$dark ? "#666" : "#aaa")};
  border-top-color: #777;
`;

/* notes drawn over the window */
const RedFrame = styled.div`
  position: absolute;
  z-index: 2;
  left: ${(props) => props.$x}px;
  top: ${(props) => props.$y}px;
  width: ${(props) => props.$w}px;
  height: ${(props) => props.$h}px;
  border: 3px solid ${RED};
  border-radius: 3px;
  pointer-events: none;
`;

const RedNote = styled.p`
  position: absolute;
  z-index: 2;
  ${(props) => (props.$right ? `right: ${props.$right}px` : `left: ${props.$x}px`)};
  top: ${(props) => props.$y}px;
  margin: 0;
  color: ${RED};
  font-family: "Noto Sans CJK SC", sans-serif;
  font-size: 21px;
  font-weight: 400;
  line-height: 28px;
  white-space: nowrap;
  pointer-events: none;
`;
